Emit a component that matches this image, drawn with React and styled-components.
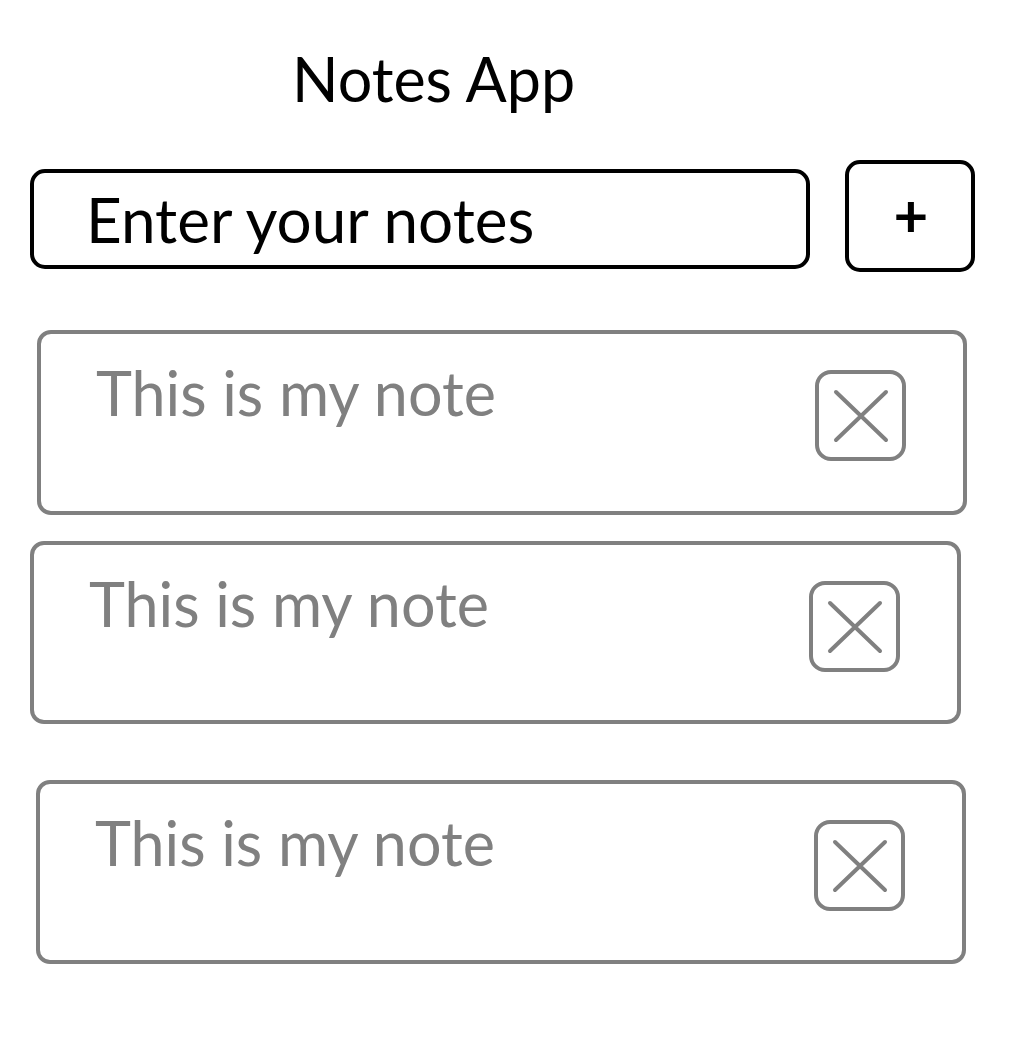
import React from "react";
import styled, { createGlobalStyle } from "styled-components";

const Global = createGlobalStyle`
  html, body { margin: 0; padding: 0; background: #ffffff; }
  body { font-family: Lato, "Open Sans", "Liberation Sans", sans-serif; }
  * { box-sizing: border-box; }
`;

const Page = styled.div`
  width: 1031px;
  min-height: 1045px;
  padding-top: 48px;
  display: flex;
  flex-direction: column;
`;

const Title = styled.h1`
  margin: 0 0 0 292px;
  font-size: 61px;
  line-height: 1;
  font-weight: 400;
  color: #000;
`;

const InputRow = styled.div`
  display: flex;
  align-items: flex-start;
  gap: 35px;
  margin: 51px 0 0 30px;
`;

const NoteInput = styled.input`
  width: 780px;
  height: 100px;
  margin-top: 9px;
  border: 4px solid #000;
  border-radius: 15px;
  padding: 0 0 0 52px;
  font-family: inherit;
  font-size: 62px;
  color: #000;
  background: #fff;
  outline: none;
  &::placeholder { color: #000; opacity: 1; }
`;

const AddButton = styled.button`
  width: 130px;
  height: 112px;
  border: 4px solid #000;
  border-radius: 15px;
  background: #fff;
  padding: 0 0 4px 2px;
  display: flex;
  align-items: center;
  justify-content: center;
  font-family: inherit;
  font-size: 60px;
  font-weight: 700;
  line-height: 1;
  color: #000;
  cursor: pointer;
`;

const NoteList = styled.div`
  display: flex;
  flex-direction: column;
`;

const NoteCard = styled.div`
  margin-left: ${(p) => p.$left}px;
  margin-top: ${(p) => p.$top}px;
  width: ${(p) => p.$width}px;
  height: ${(p) => p.$height}px;
  border: 4px solid #808080;
  border-radius: 14px;
  display: flex;
  justify-content: space-between;
  align-items: flex-start;
  padding: 28px 57px 0 55px;
`;

const NoteText = styled.span`
  font-size: 61px;
  line-height: 1;
  color: #808080;
`;

const CloseButton = styled.button`
  width: 91px;
  height: 91px;
  margin-top: 8px;
  border: 4px solid #808080;
  border-radius: 16px;
  background: #fff;
  padding: 0;
  display: flex;
  align-items: center;
  justify-content: center;
  cursor: pointer;
`;

const CloseIcon = () => (
  <svg width="58" height="56" viewBox="0 0 58 56" fill="none">
    <path d="M4 4 L54 52 M54 4 L4 52" stroke="#808080" strokeWidth="4" strokeLinecap="round" />
  </svg>
);

const notes = [
  { left: 37, top: 58, width: 930, height: 185 },
  { left: 30, top: 26, width: 931, height: 183 },
  { left: 36, top: 56, width: 930, height: 184 },
];

export default function App() {
  return (
    <>
      <Global />
      <Page>
        <Title>Notes App</Title>
        <InputRow>
          <NoteInput placeholder="Enter your notes" />
          <AddButton>+</AddButton>
        </InputRow>
        <NoteList>
          {notes.map((n, i) => (
            <NoteCard key={i} $left={n.left} $top={n.top} $width={n.width} $height={n.height}>
              <NoteText>This is my note</NoteText>
              <CloseButton aria-label="Delete note">
                <CloseIcon />
              </CloseButton>
            </NoteCard>
          ))}
        </NoteList>
      </Page>
    </>
  );
}
